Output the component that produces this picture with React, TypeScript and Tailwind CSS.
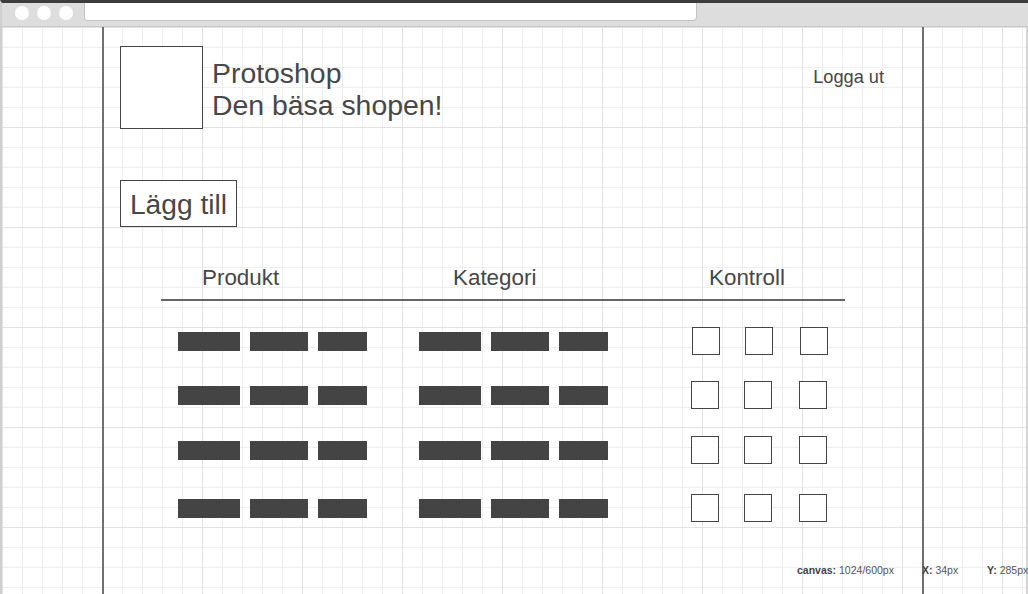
const rows = [
  { top: 'mt-[26px]', boxPad: 'pl-[25px]' },
  { top: 'mt-[26px]', boxPad: 'pl-[24px]' },
  { top: 'mt-[27px]', boxPad: 'pl-[24px]' },
  { top: 'mt-[30px]', boxPad: 'pl-[24px]' },
];

function Bars() {
  return (
    <div className="flex gap-[10px]">
      <div className="w-[62px] h-[19px] bg-[#444]" />
      <div className="w-[58px] h-[19px] bg-[#444]" />
      <div className="w-[49px] h-[19px] bg-[#444]" />
    </div>
  );
}

function Box() {
  return <div className="w-[28px] h-[28px] border-[1.5px] border-[#444] bg-white" />;
}

export default function App() {
  return (
    <div className="relative w-[1028px] h-[594px] overflow-hidden bg-white flex flex-col font-['Liberation_Sans',Arial,sans-serif] text-[#474747]">
      {/* browser chrome */}
      <div className="h-[27px] shrink-0 bg-[#dddddd] border-t-[3px] border-t-[#3d3d3d] border-b border-b-[#c9c9c9] border-l-2 border-l-[#cfcfcf] flex items-start pl-[13px]">
        <div className="flex gap-[8px] mt-[3px]">
          <div className="w-[14px] h-[14px] rounded-full bg-white" />
          <div className="w-[14px] h-[14px] rounded-full bg-white" />
          <div className="w-[14px] h-[14px] rounded-full bg-white" />
        </div>
        <div className="ml-[11px] w-[613px] h-[18px] bg-white rounded-b-[4px] border border-t-0 border-[#c4c4c4]" />
      </div>

      {/* canvas */}
      <div className="flex-1 flex border-l-2 border-l-[#cfcfcf] border-r-2 border-r-[#d6d6d6] bg-white bg-[linear-gradient(to_right,#e2e2e2_1px,transparent_1px),linear-gradient(to_bottom,#e2e2e2_1px,transparent_1px),linear-gradient(to_right,#eeeeee_1px,transparent_1px),linear-gradient(to_bottom,#eeeeee_1px,transparent_1px)] bg-[size:100px_100px,100px_100px,20px_20px,20px_20px]">
        <div className="ml-[100px] w-[822px] border-x-2 border-[#707070] flex flex-col">
          {/* header */}
          <div className="flex items-start pt-[19px] pl-[16px]">
            <div className="w-[83px] h-[83px] border border-[#444] bg-white shrink-0" />
            <div className="ml-[9px] mt-[11px] text-[28.4px] leading-[32px]">
              <div>Protoshop</div>
              <div>Den bäsa shopen!</div>
            </div>
            <div className="ml-auto mr-[38px] mt-[21px] text-[18.2px] leading-[20px]">Logga ut</div>
          </div>

          {/* add button */}
          <div className="ml-[16px] mt-[51px] w-[117px] h-[47px] border border-[#444] bg-white flex items-center justify-center text-[28.2px] leading-[32px]">
            Lägg till
          </div>

          {/* table */}
          <div className="ml-[57px] w-[684px]">
            <div className="mt-[38px] grid grid-cols-[250px_256px_178px] text-[22.4px] leading-[26px] pb-[8px] border-b-2 border-[#666]">
              <div className="pl-[41px]">Produkt</div>
              <div className="pl-[42px]">Kategori</div>
              <div className="pl-[42px]">Kontroll</div>
            </div>
            {rows.map((r, i) => (
              <div key={i} className={`${r.top} grid grid-cols-[250px_256px_178px] h-[28px] items-center`}>
                <div className="pl-[17px]">
                  <Bars />
                </div>
                <div className="pl-[8px]">
                  <Bars />
                </div>
                <div className={`${r.boxPad} flex gap-[25px]`}>
                  <Box />
                  <Box />
                  <div className="ml-[2px]">
                    <Box />
                  </div>
                </div>
              </div>
            ))}
          </div>
        </div>
      </div>

      {/* status info */}
      <div className="absolute left-[797px] top-[564px] flex text-[10.5px] leading-[12px] text-[#555] whitespace-nowrap">
        <div className="w-[125px]">
          <span className="font-bold text-[#444]">canvas:</span> 1024/600px
        </div>
        <div className="w-[65px]">
          <span className="font-bold text-[#444]">X:</span> 34px
        </div>
        <div>
          <span className="font-bold text-[#444]">Y:</span> 285px
        </div>
      </div>
    </div>
  );
}
